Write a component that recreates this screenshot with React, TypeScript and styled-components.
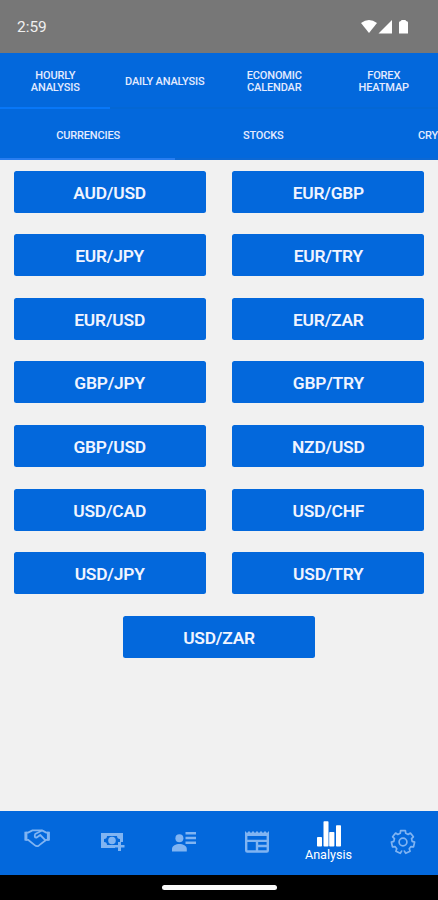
import React from "react";
import styled, { createGlobalStyle } from "styled-components";

const GlobalStyle = createGlobalStyle`
  * { box-sizing: border-box; }
  body { margin: 0; font-family: Roboto, sans-serif; background: #f1f1f1; }
`;

const Screen = styled.div`
  width: 438px;
  height: 900px;
  display: flex;
  flex-direction: column;
  overflow: hidden;
  background: #f1f1f1;
  color: #e8edff;
`;

const StatusBar = styled.header`
  height: 53px;
  flex: none;
  display: flex;
  align-items: center;
  justify-content: space-between;
  padding: 1px 28px 0 17px;
  background: #777777;
  color: #f0f0f0;
  font-size: 15.4px;
`;

const StatusIcons = styled.svg`
  width: 50px;
  height: 16px;
  fill: #ffffff;
`;

const TabBar = styled.nav<{ $height: number }>`
  height: ${(p) => p.$height}px;
  flex: none;
  display: flex;
  background: #0368dc;
`;

const Tab = styled.button<{ $width: number; $line: string; $top: number }>`
  width: ${(p) => p.$width}px;
  flex: none;
  display: flex;
  align-items: center;
  justify-content: center;
  padding: ${(p) => p.$top}px 0 0 1px;
  border: 0;
  border-bottom: 2px solid ${(p) => p.$line};
  background: none;
  color: #e4ebff;
  font: 500 11px/12.4px Roboto, sans-serif;
  letter-spacing: -0.15px;
  text-align: center;
  white-space: pre-line;
`;

const Content = styled.main`
  flex: 1;
  display: flex;
  flex-wrap: wrap;
  align-content: flex-start;
  justify-content: center;
  gap: 21.6px 26.4px;
  padding: 10.7px 13.3px 0 13.3px;
`;

const PairButton = styled.button`
  width: 192.3px;
  height: 42px;
  padding: 2px 0 0;
  border: 0;
  border-radius: 2.5px;
  background: #0368dc;
  color: #f0f4ff;
  font: 600 17.4px/20px Roboto, sans-serif;
  letter-spacing: -0.22px;
`;

const BottomBar = styled.nav`
  height: 64px;
  flex: none;
  display: grid;
  grid-template-columns: repeat(6, 1fr);
  background: #0368dc;
`;

const NavItem = styled.div<{ $active?: boolean; $top: number; $shift?: number }>`
  display: flex;
  flex-direction: column;
  align-items: center;
  padding-top: ${(p) => p.$top}px;
  padding-left: ${(p) => p.$shift ?? 0}px;
  color: ${(p) => (p.$active ? "#ffffff" : "#80b4f2")};
  font-size: 12.6px;
  line-height: 16px;
  svg { display: block; flex: none; }
`;

const GestureArea = styled.footer`
  height: 25px;
  flex: none;
  display: flex;
  justify-content: center;
  align-items: center;
  background: #000000;
`;

const GesturePill = styled.div`
  width: 115px;
  height: 5px;
  border-radius: 3px;
  background: #fafafa;
`;

const sections = ["HOURLY\nANALYSIS", "DAILY ANALYSIS", "ECONOMIC\nCALENDAR", "FOREX\nHEATMAP"];
const markets = ["CURRENCIES", "STOCKS", "CRYPTO"];
const pairs = [
  "AUD/USD", "EUR/GBP", "EUR/JPY", "EUR/TRY", "EUR/USD", "EUR/ZAR", "GBP/JPY", "GBP/TRY",
  "GBP/USD", "NZD/USD", "USD/CAD", "USD/CHF", "USD/JPY", "USD/TRY", "USD/ZAR",
];

const HandshakeIcon = () => (
  <svg width="26" height="19" viewBox="0 0 26 19" fill="none" stroke="currentColor" strokeWidth="1.8" strokeLinejoin="round" strokeLinecap="round">
    <path d="M2 3.6H4L8.5 1.4H18L22.3 3.6H24.4M2 10.8H4L11 16.4Q12.8 17.8 15 16.4L22.3 10.8H24.4" />
    <path d="M17.5 1.7L11.2 5Q9.8 8.8 12.7 8.5L16.2 6L21.3 11.2" />
    <path d="M1.9 2.8V11.6M24.4 2.8V11.6" strokeWidth="3" strokeLinecap="butt" />
  </svg>
);

const CashPlusIcon = () => (
  <svg width="24" height="19" viewBox="0 0 24 19" fill="currentColor">
    <path fillRule="evenodd" d="M0 0H22V9H19V6A3 3 0 0 1 16 3H6A3 3 0 0 1 3 6V9A3 3 0 0 1 6 12H14V15H0Z" />
    <circle cx="11" cy="7.5" r="3.8" />
    <path d="M17 9H20V12H23.5V14.5H20V18H17V14.5H13.5V12H17Z" />
  </svg>
);

const AccountDetailsIcon = () => (
  <svg width="24" height="20" viewBox="0 0 24 20" fill="currentColor">
    <circle cx="7.4" cy="6.2" r="4" />
    <path d="M0 19.5V17C0 13.8 4 12 7.4 12S14.8 13.8 14.8 17V19.5Z" />
    <path d="M13.5 0H24V2.5H13.5ZM13.5 4.7H24V7.2H13.5ZM13.5 9.4H24V12H13.5Z" />
  </svg>
);

const NewspaperIcon = () => (
  <svg width="24" height="22" viewBox="0 0 24 22" fill="currentColor">
    <path
      fillRule="evenodd"
      d="M0 0L2 2L4 0L6 2L8 0L10 2L12 0L14 2L16 0L18 2L20 0L22 2L24 0V19.5Q24 21.7 21.8 21.7H2.2Q0 21.7 0 19.5ZM2.4 5V8.8H21.6V5ZM2.4 11V19.3H10.8V11ZM13.2 11V13.8H21.6V11ZM13.2 16.3V19.3H21.6V16.3Z"
    />
  </svg>
);

const BarsIcon = () => (
  <svg width="24" height="26" viewBox="0 0 24 26" fill="currentColor">
    <rect x="0" y="16" width="5" height="9.5" rx="0.8" />
    <rect x="6.5" y="0.3" width="5" height="25.2" rx="0.8" />
    <rect x="12.2" y="11" width="5.2" height="14.5" rx="0.8" />
    <rect x="19" y="4.2" width="5" height="21.3" rx="0.8" />
  </svg>
);

// Seven teeth, one at the top; the rim stays open between the two lowest.
const gearPoint = (degrees: number, radius: number) => {
  const a = (degrees * Math.PI) / 180;
  return `${(13 + radius * Math.sin(a)).toFixed(2)} ${(13 - radius * Math.cos(a)).toFixed(2)}`;
};
const gearPath =
  "M" +
  [-3, -2, -1, 0, 1, 2, 3]
    .flatMap((k) => {
      const a = (k * 360) / 7;
      return [gearPoint(a - 17, 9.2), gearPoint(a - 12, 11.6), gearPoint(a + 12, 11.6), gearPoint(a + 17, 9.2)];
    })
    .join("L");

const GearIcon = () => (
  <svg width="26" height="26" viewBox="0 0 26 26" fill="none" stroke="currentColor" strokeWidth="1.7" strokeLinejoin="round" strokeLinecap="round">
    <path d={gearPath} />
    <circle cx="13" cy="13" r="3.9" />
  </svg>
);

export default function App() {
  return (
    <>
      <GlobalStyle />
      <Screen>
        <StatusBar>
          <span>2:59</span>
          <StatusIcons viewBox="0 0 50 16">
            <path d="M1 4Q9 -2 17 4L9 14Z" />
            <path d="M32 1V14.5H18.5Z" />
            <path d="M39 3.5Q39 2 41 2Q41 1 42 1H45Q46 1 46 2Q48 2 48 3.5V14.5H39Z" />
          </StatusIcons>
        </StatusBar>
        <TabBar $height={56}>
          {sections.map((label, i) => (
            <Tab key={label} $width={109.5} $top={4} $line={i === 0 ? "#0877f8" : "#0467d4"}>{label}</Tab>
          ))}
        </TabBar>
        <TabBar $height={51}>
          {markets.map((label, i) => (
            <Tab key={label} $width={175.2} $top={5.5} $line={i === 0 ? "#287df0" : "#0c68d4"}>{label}</Tab>
          ))}
        </TabBar>
        <Content>
          {pairs.map((pair) => <PairButton key={pair}>{pair}</PairButton>)}
        </Content>
        <BottomBar>
          <NavItem $top={18}><HandshakeIcon /></NavItem>
          <NavItem $top={22} $shift={6}><CashPlusIcon /></NavItem>
          <NavItem $top={21} $shift={3}><AccountDetailsIcon /></NavItem>
          <NavItem $top={20} $shift={3}><NewspaperIcon /></NavItem>
          <NavItem $top={10} $active><BarsIcon />Analysis</NavItem>
          <NavItem $top={18} $shift={3}><GearIcon /></NavItem>
        </BottomBar>
        <GestureArea><GesturePill /></GestureArea>
      </Screen>
    </>
  );
}
